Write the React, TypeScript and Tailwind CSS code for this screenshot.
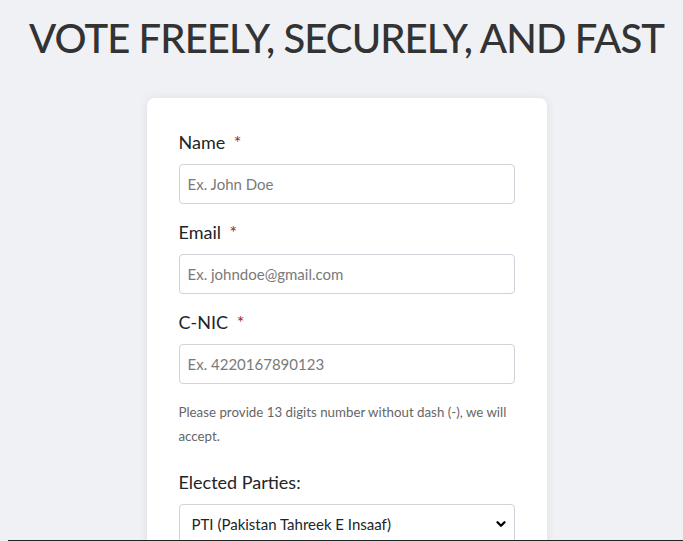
import { ChevronDown } from 'lucide-react';

const font = { fontFamily: 'Lato, "Noto Sans", sans-serif' };

function Field({ label, placeholder }: { label: string; placeholder: string }) {
  return (
    <div className="flex flex-col">
      <label className="text-[18px] leading-[27px] text-[#212529] mb-2">
        {label} <span className="text-[#9b2c2c] ml-1">*</span>
      </label>
      <input
        className="h-10 w-full rounded-[4px] border border-[#ced4da] bg-white px-2 text-[15px] text-[#212529] placeholder:text-[#7a7a7a] outline-none"
        placeholder={placeholder}
        style={font}
      />
    </div>
  );
}

export default function App() {
  return (
    <div className="min-h-[541px] bg-[#eff1f5] overflow-hidden pl-[10px]" style={font}>
      <h1 className="pt-[13px] text-center text-[40px] leading-[50px] text-[#333333] font-medium tracking-[-0.9px] whitespace-nowrap">
        VOTE FREELY, SECURELY, AND FAST
      </h1>
      <div className="mx-auto mt-[35px] w-[400px] rounded-lg bg-white px-8 pt-[31px] pb-8 shadow-[0_0_10px_rgba(0,0,0,0.08)]">
        <div className="flex flex-col gap-[15px]">
          <Field label="Name" placeholder="Ex. John Doe" />
          <Field label="Email" placeholder="Ex. johndoe@gmail.com" />
          <Field label="C-NIC" placeholder="Ex. 4220167890123" />
        </div>
        <p className="mt-4 text-[13.3px] leading-6 text-[#666666]">
          Please provide 13 digits number without dash (-), we will accept.
        </p>
        <div className="mt-[21px] flex flex-col">
          <label className="text-[18px] leading-[27px] text-[#212529] mb-2">Elected Parties:</label>
          <div className="relative">
            <select
              className="h-10 w-full appearance-none rounded-[4px] border border-[#ced4da] bg-white pl-3 pr-8 text-[15px] text-[#212529] outline-none"
              style={font}
              defaultValue="PTI"
            >
              <option value="PTI">PTI (Pakistan Tahreek E Insaaf)</option>
              <option value="PMLN">PML-N (Pakistan Muslim League N)</option>
              <option value="PPP">PPP (Pakistan Peoples Party)</option>
            </select>
            <ChevronDown className="pointer-events-none absolute right-[7px] top-[13px] h-3.5 w-3.5 text-black" strokeWidth={4} />
          </div>
        </div>
      </div>
      <div className="fixed bottom-0 left-[8px] right-0 h-px bg-[#222222]" />
    </div>
  );
}
